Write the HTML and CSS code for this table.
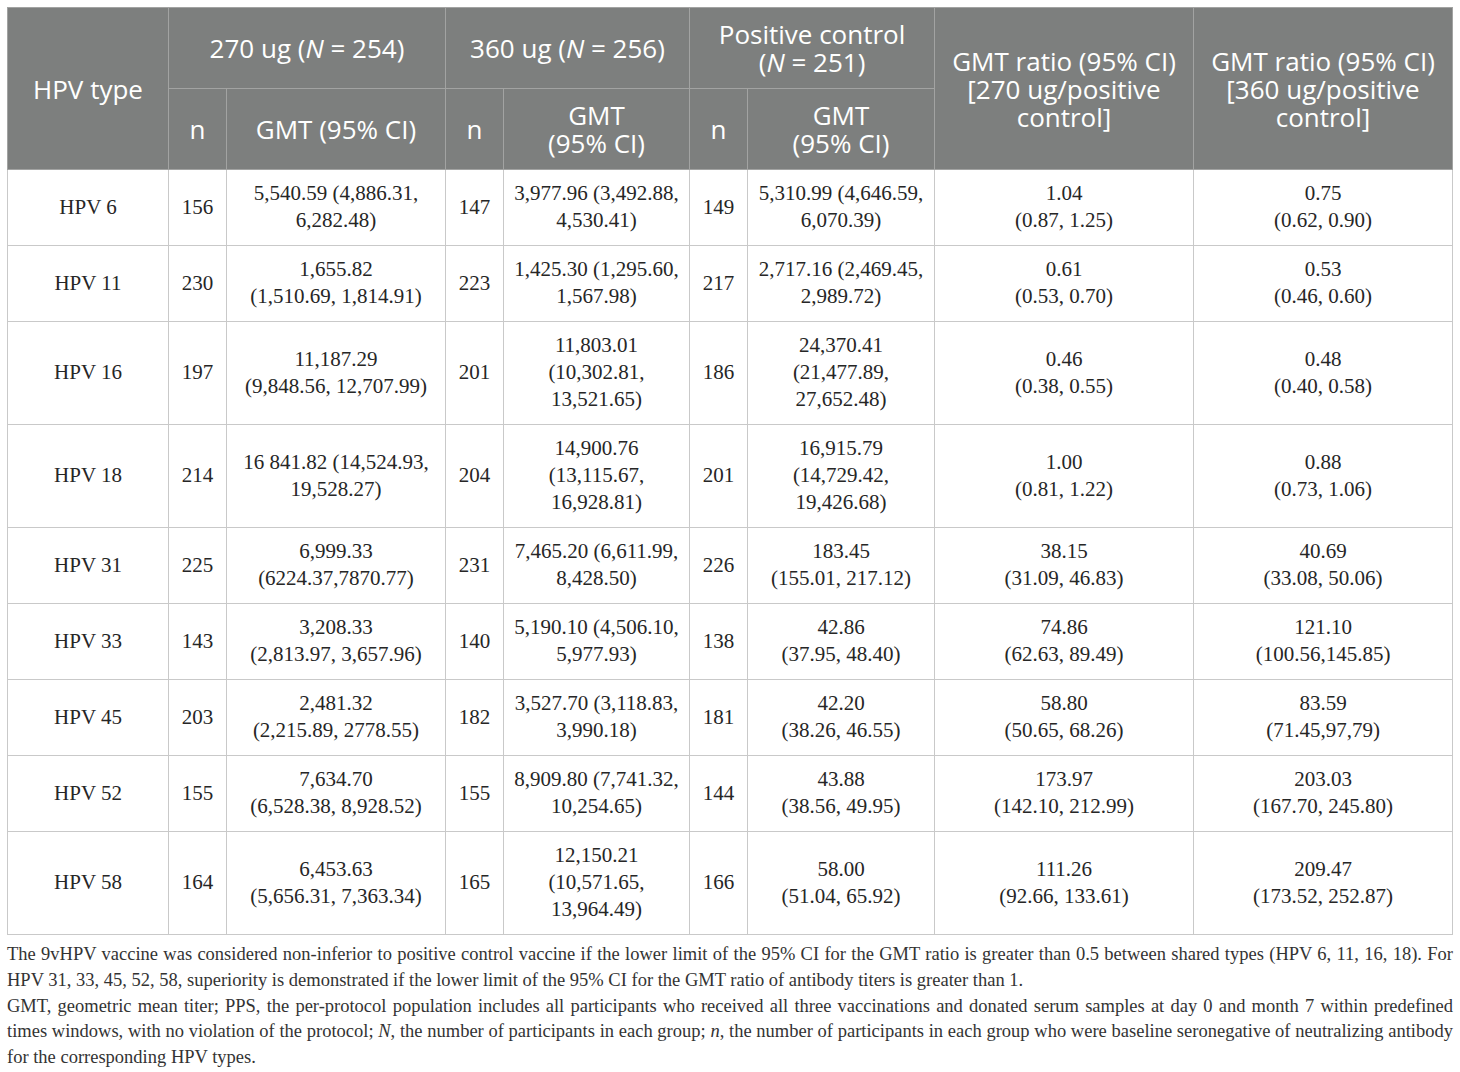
FILE: index.html
```html
<!DOCTYPE html>
<html>
<head>
<meta charset="utf-8">
<link rel="stylesheet" href="styles.css">
</head>
<body>
<div class="page">
<table class="data">
<colgroup>
<col class="c-type"><col class="c-n"><col class="c-gmt1"><col class="c-n"><col class="c-gmt2"><col class="c-n"><col class="c-gmt3"><col class="c-ratio"><col class="c-ratio">
</colgroup>
<thead>
<tr class="h1">
<th rowspan="2">HPV type</th>
<th colspan="2">270 ug (<i>N</i> = 254)</th>
<th colspan="2">360 ug (<i>N</i> = 256)</th>
<th colspan="2">Positive control<br>(<i>N</i> = 251)</th>
<th rowspan="2">GMT ratio (95% CI)<br>[270 ug/positive<br>control]</th>
<th rowspan="2">GMT ratio (95% CI)<br>[360 ug/positive<br>control]</th>
</tr>
<tr class="h2">
<th>n</th><th>GMT (95% CI)</th>
<th>n</th><th>GMT<br>(95% CI)</th>
<th>n</th><th>GMT<br>(95% CI)</th>
</tr>
</thead>
<tbody>
<tr><td>HPV 6</td><td>156</td><td>5,540.59 (4,886.31,<br>6,282.48)</td><td>147</td><td>3,977.96 (3,492.88,<br>4,530.41)</td><td>149</td><td>5,310.99 (4,646.59,<br>6,070.39)</td><td>1.04<br>(0.87, 1.25)</td><td>0.75<br>(0.62, 0.90)</td></tr>
<tr><td>HPV 11</td><td>230</td><td>1,655.82<br>(1,510.69, 1,814.91)</td><td>223</td><td>1,425.30 (1,295.60,<br>1,567.98)</td><td>217</td><td>2,717.16 (2,469.45,<br>2,989.72)</td><td>0.61<br>(0.53, 0.70)</td><td>0.53<br>(0.46, 0.60)</td></tr>
<tr><td>HPV 16</td><td>197</td><td>11,187.29<br>(9,848.56, 12,707.99)</td><td>201</td><td>11,803.01<br>(10,302.81,<br>13,521.65)</td><td>186</td><td>24,370.41<br>(21,477.89,<br>27,652.48)</td><td>0.46<br>(0.38, 0.55)</td><td>0.48<br>(0.40, 0.58)</td></tr>
<tr><td>HPV 18</td><td>214</td><td>16 841.82 (14,524.93,<br>19,528.27)</td><td>204</td><td>14,900.76<br>(13,115.67,<br>16,928.81)</td><td>201</td><td>16,915.79<br>(14,729.42,<br>19,426.68)</td><td>1.00<br>(0.81, 1.22)</td><td>0.88<br>(0.73, 1.06)</td></tr>
<tr><td>HPV 31</td><td>225</td><td>6,999.33<br>(6224.37,7870.77)</td><td>231</td><td>7,465.20 (6,611.99,<br>8,428.50)</td><td>226</td><td>183.45<br>(155.01, 217.12)</td><td>38.15<br>(31.09, 46.83)</td><td>40.69<br>(33.08, 50.06)</td></tr>
<tr><td>HPV 33</td><td>143</td><td>3,208.33<br>(2,813.97, 3,657.96)</td><td>140</td><td>5,190.10 (4,506.10,<br>5,977.93)</td><td>138</td><td>42.86<br>(37.95, 48.40)</td><td>74.86<br>(62.63, 89.49)</td><td>121.10<br>(100.56,145.85)</td></tr>
<tr><td>HPV 45</td><td>203</td><td>2,481.32<br>(2,215.89, 2778.55)</td><td>182</td><td>3,527.70 (3,118.83,<br>3,990.18)</td><td>181</td><td>42.20<br>(38.26, 46.55)</td><td>58.80<br>(50.65, 68.26)</td><td>83.59<br>(71.45,97,79)</td></tr>
<tr><td>HPV 52</td><td>155</td><td>7,634.70<br>(6,528.38, 8,928.52)</td><td>155</td><td>8,909.80 (7,741.32,<br>10,254.65)</td><td>144</td><td>43.88<br>(38.56, 49.95)</td><td>173.97<br>(142.10, 212.99)</td><td>203.03<br>(167.70, 245.80)</td></tr>
<tr><td>HPV 58</td><td>164</td><td>6,453.63<br>(5,656.31, 7,363.34)</td><td>165</td><td>12,150.21<br>(10,571.65,<br>13,964.49)</td><td>166</td><td>58.00<br>(51.04, 65.92)</td><td>111.26<br>(92.66, 133.61)</td><td>209.47<br>(173.52, 252.87)</td></tr>
</tbody>
</table>
<div class="notes">
<p>The 9vHPV vaccine was considered non-inferior to positive control vaccine if the lower limit of the 95% CI for the GMT ratio is greater than 0.5 between shared types (HPV 6, 11, 16, 18). For HPV 31, 33, 45, 52, 58, superiority is demonstrated if the lower limit of the 95% CI for the GMT ratio of antibody titers is greater than 1.</p>
<p>GMT, geometric mean titer; PPS, the per-protocol population includes all participants who received all three vaccinations and donated serum samples at day 0 and month 7 within predefined times windows, with no violation of the protocol; <i>N</i>, the number of participants in each group; <i>n</i>, the number of participants in each group who were baseline seronegative of neutralizing antibody for the corresponding HPV types.</p>
</div>
</div>
</body>
</html>
```

FILE: styles.css
```css
html, body {
  margin: 0;
  padding: 0;
  background: #ffffff;
}

.page {
  padding: 7px 8px 0 7px;
}

.data {
  width: 1446px;
  border-collapse: collapse;
  table-layout: fixed;
  font-family: "Liberation Serif", "Times New Roman", serif;
  color: #262626;
  border: 1px solid #c9c9c9;
}

.c-type { width: 161px; }
.c-n { width: 58px; }
.c-gmt1 { width: 219px; }
.c-gmt2 { width: 186px; }
.c-gmt3 { width: 187px; }
.c-ratio { width: 259px; }

.data th {
  background: #7d7f7e;
  color: #ffffff;
  font-family: "Open Sans", "Liberation Sans", sans-serif;
  font-weight: 400;
  font-size: 26px;
  line-height: 28px;
  text-align: center;
  vertical-align: middle;
  border: 1px solid #a2a3a2;
  padding: 0 4px;
}

.data th i {
  font-style: italic;
}

.data .h1 th,
.data .h2 th {
  height: 80px;
}

.data td {
  font-size: 21px;
  line-height: 27px;
  text-align: center;
  vertical-align: middle;
  border: 1px solid #c9c9c9;
  padding: 10px 2px 11px;
}

.notes {
  font-family: "Liberation Serif", "Times New Roman", serif;
  font-size: 18.5px;
  line-height: 25.8px;
  color: #333333;
  text-align: justify;
  padding-top: 7px;
  width: 1446px;
}

.notes p {
  margin: 0;
}
```
